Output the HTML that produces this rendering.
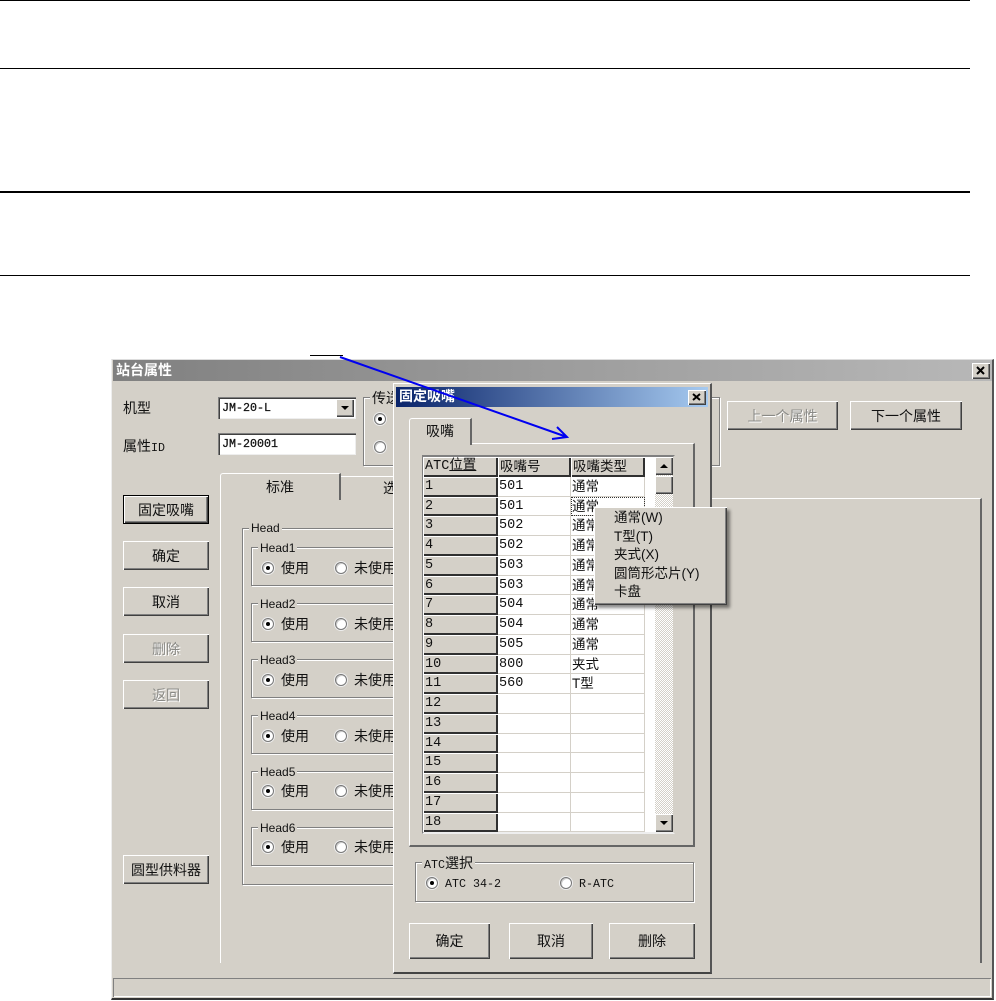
<!DOCTYPE html>
<html><head><meta charset="utf-8"><style>
html,body{margin:0;padding:0;background:#fff}
body{position:relative;width:996px;height:1001px;overflow:hidden;font-family:"Liberation Sans","Noto Sans CJK SC",sans-serif;font-size:14px;color:#111;line-height:1}
div,span{position:absolute;box-sizing:border-box;white-space:nowrap}
.l{background:#000;left:0;width:970px;height:1px}
.bg{background:#d4d0c8}
.btn{background:#d4d0c8;box-shadow:inset 1px 1px #fff,inset -1px -1px #404040,inset -2px -2px #808080;display:flex;align-items:center;justify-content:center;font-size:14px}
.dis{color:#8a8a86;text-shadow:1px 1px #fff}
.def{border:1px solid #000}
.grp{border:1px solid #808080;box-shadow:1px 1px #fff,inset 1px 1px #fff}
.cap{background:#d4d0c8;padding:0 2px;font-size:12px;height:14px;line-height:14px}
.t{line-height:16px;height:16px}
.r{width:12px;height:12px;border-radius:50%;background:#fff;border:1px solid #777;box-shadow:0 0 0 1px #eee,inset 1px 1px #ccc}
.r.on::after{content:"";position:absolute;left:3px;top:3px;width:4px;height:4px;border-radius:50%;background:#000}
.sunk{background:#fff;box-shadow:inset 1px 1px #808080,inset 2px 2px #404040,inset -1px -1px #eee;font:11.67px/1 "Liberation Mono",monospace;padding:6px 0 0 4px;-webkit-text-stroke:.25px #111}
.x{background:#d4d0c8;box-shadow:inset 1px 1px #fff,inset -1px -1px #404040,inset -2px -2px #808080}
.x svg{position:absolute;left:0;top:0}
.grid{display:grid;left:423px;top:457px;width:222px;grid-template-columns:75px 73px 74px;grid-auto-rows:19.76px}
.grid b{font-weight:normal;display:block;overflow:hidden;white-space:nowrap;font-size:13.5px;line-height:20px;padding-left:1px}
.grid .h{background:#d4d0c8;box-shadow:inset 1px 1px #fff,inset -2px -2px #303030;padding-left:2px}
.grid .c{background:#fff;border-right:1px solid #d4d0c8;border-bottom:1px solid #d4d0c8}
.m{font-family:"Liberation Mono","Noto Sans CJK SC",monospace;font-size:11.67px}
.grid .f{outline:1px dotted #333;outline-offset:-1px}
.sb{box-shadow:inset 1px 1px #fff,inset -1px -1px #404040,inset -2px -2px #808080;background:#d4d0c8}
.tri{width:0;height:0;border-left:4px solid transparent;border-right:4px solid transparent}
#w{left:0;top:0;width:996px;height:1001px;filter:blur(.35px)}
</style></head><body>
<div class="l" style="top:0"></div>
<div class="l" style="top:68px"></div>
<div class="l" style="top:191px;height:2px"></div>
<div class="l" style="top:275px"></div>
<div class="l" style="left:310px;top:355px;width:33px"></div>

<div id="w">
<div class="bg" style="left:111px;top:359px;width:883px;height:641px;border-right:2px solid #555;border-bottom:2px solid #333;border-left:1px solid #eee;border-top:1px solid #ddd"></div>
<div style="left:113px;top:360px;width:879px;height:21px;background:linear-gradient(90deg,#808080,#b8b8b8);color:#fff;font-weight:bold;font-size:14px;line-height:20px;padding-left:3px">站台属性</div>
<div class="x" style="left:972px;top:363px;width:18px;height:16px"><svg width="18" height="16"><path d="M5 4L12 11M12 4L5 11" stroke="#000" stroke-width="2" fill="none"/></svg></div>

<div class="t" style="left:123px;top:400px">机型</div>
<div class="t" style="left:123px;top:438px">属性<span class="m" style="position:static">ID</span></div>
<div class="sunk" style="left:218px;top:397px;width:138px;height:22px">JM-20-L</div>
<div class="btn" style="left:336px;top:399px;width:18px;height:18px"><div class="tri" style="border-top:4px solid #000;position:static"></div></div>
<div class="sunk" style="left:218px;top:433px;width:138px;height:22px">JM-20001</div>

<div class="grp" style="left:363px;top:397px;width:357px;height:69px"></div>
<div class="cap" style="left:370px;top:391px;font-size:14px">传送</div>
<div class="r on" style="left:374px;top:413px"></div>
<div class="r" style="left:374px;top:441px"></div>

<div class="btn dis" style="left:727px;top:401px;width:111px;height:29px">上一个属性</div>
<div class="btn" style="left:850px;top:401px;width:112px;height:29px">下一个属性</div>

<div class="btn def" style="left:123px;top:495px;width:86px;height:29px">固定吸嘴</div>
<div class="btn" style="left:123px;top:541px;width:86px;height:29px">确定</div>
<div class="btn" style="left:123px;top:587px;width:86px;height:29px">取消</div>
<div class="btn dis" style="left:123px;top:634px;width:86px;height:29px">删除</div>
<div class="btn dis" style="left:123px;top:680px;width:86px;height:29px">返回</div>
<div class="btn" style="left:123px;top:855px;width:86px;height:29px">圆型供料器</div>

<div style="left:220px;top:498px;width:762px;height:465px;border-top:1px solid #fff;border-left:1px solid #fff;border-right:2px solid #666"></div>
<div class="bg" style="left:220px;top:473px;width:121px;height:27px;border-top:1px solid #fff;border-left:1px solid #fff;border-right:2px solid #666;border-top-left-radius:3px;text-align:center;line-height:26px;font-size:14px">标准</div>
<div class="bg" style="left:341px;top:476px;width:60px;height:23px;border-top:1px solid #fff;line-height:23px;padding-left:42px;font-size:14px">选</div>

<div class="grp" style="left:242px;top:528px;width:160px;height:357px;border-right:0"></div>
<div class="cap" style="left:249px;top:521px">Head</div>

<div class="grp" style="left:251px;top:547px;width:150px;height:39px;border-right:0"></div>
<div class="cap" style="left:258px;top:541px">Head1</div>
<div class="r on" style="left:262px;top:562px"></div><div class="t" style="left:281px;top:560px">使用</div>
<div class="r" style="left:335px;top:562px"></div><div class="t" style="left:354px;top:560px">未使用</div>

<div class="grp" style="left:251px;top:603px;width:150px;height:39px;border-right:0"></div>
<div class="cap" style="left:258px;top:597px">Head2</div>
<div class="r on" style="left:262px;top:618px"></div><div class="t" style="left:281px;top:616px">使用</div>
<div class="r" style="left:335px;top:618px"></div><div class="t" style="left:354px;top:616px">未使用</div>

<div class="grp" style="left:251px;top:659px;width:150px;height:39px;border-right:0"></div>
<div class="cap" style="left:258px;top:653px">Head3</div>
<div class="r on" style="left:262px;top:674px"></div><div class="t" style="left:281px;top:672px">使用</div>
<div class="r" style="left:335px;top:674px"></div><div class="t" style="left:354px;top:672px">未使用</div>

<div class="grp" style="left:251px;top:715px;width:150px;height:39px;border-right:0"></div>
<div class="cap" style="left:258px;top:709px">Head4</div>
<div class="r on" style="left:262px;top:730px"></div><div class="t" style="left:281px;top:728px">使用</div>
<div class="r" style="left:335px;top:730px"></div><div class="t" style="left:354px;top:728px">未使用</div>

<div class="grp" style="left:251px;top:771px;width:150px;height:39px;border-right:0"></div>
<div class="cap" style="left:258px;top:765px">Head5</div>
<div class="r on" style="left:262px;top:785px"></div><div class="t" style="left:281px;top:783px">使用</div>
<div class="r" style="left:335px;top:785px"></div><div class="t" style="left:354px;top:783px">未使用</div>

<div class="grp" style="left:251px;top:827px;width:150px;height:39px;border-right:0"></div>
<div class="cap" style="left:258px;top:821px">Head6</div>
<div class="r on" style="left:262px;top:841px"></div><div class="t" style="left:281px;top:839px">使用</div>
<div class="r" style="left:335px;top:841px"></div><div class="t" style="left:354px;top:839px">未使用</div>

<div style="left:113px;top:978px;width:878px;height:19px;box-shadow:inset 1px 1px #808080,inset -1px -1px #fff"></div>

<!-- dialog -->
<div class="bg" style="left:393px;top:383px;width:319px;height:591px;border-right:2px solid #555;border-bottom:2px solid #444;border-left:1px solid #fff;border-top:1px solid #fff"></div>
<div style="left:396px;top:387px;width:312px;height:20px;background:linear-gradient(90deg,#0a246a,#a6caf0);color:#fff;font-weight:bold;font-size:14px;line-height:19px;padding-left:3px">固定吸嘴</div>
<div class="x" style="left:688px;top:390px;width:18px;height:15px"><svg width="18" height="15"><path d="M5 4L12 10M12 4L5 10" stroke="#000" stroke-width="2" fill="none"/></svg></div>

<div style="left:409px;top:443px;width:286px;height:404px;border-top:1px solid #fff;border-left:1px solid #fff;border-right:2px solid #666;border-bottom:2px solid #666"></div>
<div class="bg" style="left:409px;top:418px;width:63px;height:27px;border-top:1px solid #fff;border-left:1px solid #fff;border-right:2px solid #666;border-top-left-radius:3px;text-align:center;line-height:25px;font-size:14px">吸嘴</div>

<div style="left:422px;top:455px;width:253px;height:379px;background:#fff;border:2px solid #808080;border-right-color:#d4d0c8;border-bottom-color:#eee"></div>
<div class="grid">
<b class="h m">ATC<span style="position:static;font-size:13.5px;text-decoration:underline">位置</span></b><b class="h">吸嘴号</b><b class="h">吸嘴类型</b>
<b class="h m">1</b><b class="c m">501</b><b class="c">通常</b>
<b class="h m">2</b><b class="c m">501</b><b class="c f">通常</b>
<b class="h m">3</b><b class="c m">502</b><b class="c">通常</b>
<b class="h m">4</b><b class="c m">502</b><b class="c">通常</b>
<b class="h m">5</b><b class="c m">503</b><b class="c">通常</b>
<b class="h m">6</b><b class="c m">503</b><b class="c">通常</b>
<b class="h m">7</b><b class="c m">504</b><b class="c">通常</b>
<b class="h m">8</b><b class="c m">504</b><b class="c">通常</b>
<b class="h m">9</b><b class="c m">505</b><b class="c">通常</b>
<b class="h m">10</b><b class="c m">800</b><b class="c">夹式</b>
<b class="h m">11</b><b class="c m">560</b><b class="c">T型</b>
<b class="h m">12</b><b class="c"></b><b class="c"></b>
<b class="h m">13</b><b class="c"></b><b class="c"></b>
<b class="h m">14</b><b class="c"></b><b class="c"></b>
<b class="h m">15</b><b class="c"></b><b class="c"></b>
<b class="h m">16</b><b class="c"></b><b class="c"></b>
<b class="h m">17</b><b class="c"></b><b class="c"></b>
<b class="h m">18</b><b class="c"></b><b class="c"></b>
</div>
<div style="left:655px;top:457px;width:18px;height:375px;background:repeating-conic-gradient(#d4d0c8 0 25%,#fff 0 50%) 0 0/2px 2px"></div>
<div class="sb" style="left:655px;top:457px;width:18px;height:18px"><div class="tri" style="left:5px;top:7px;border-bottom:4px solid #000"></div></div>
<div class="sb" style="left:655px;top:476px;width:18px;height:18px"></div>
<div class="sb" style="left:655px;top:814px;width:18px;height:18px"><div class="tri" style="left:5px;top:7px;border-top:4px solid #000"></div></div>

<div class="grp" style="left:415px;top:862px;width:279px;height:40px"></div>
<div class="cap" style="left:422px;top:856px;font-size:14px"><span class="m" style="position:static">ATC</span>選択</div>
<div class="r on" style="left:426px;top:877px"></div><div class="t m" style="left:445px;top:876px">ATC 34-2</div>
<div class="r" style="left:560px;top:877px"></div><div class="t m" style="left:579px;top:876px">R-ATC</div>

<div class="btn" style="left:409px;top:923px;width:81px;height:36px">确定</div>
<div class="btn" style="left:509px;top:923px;width:84px;height:36px">取消</div>
<div class="btn" style="left:609px;top:923px;width:86px;height:36px">删除</div>

<!-- context menu -->
<div class="bg" style="left:594px;top:507px;width:133px;height:98px;box-shadow:inset 1px 1px #fff,inset -1px -1px #404040,inset -2px -2px #808080,3px 3px 3px rgba(0,0,0,.45)"></div>
<div class="t" style="left:614px;top:510px;font-size:13.5px">通常(W)</div>
<div class="t" style="left:614px;top:529px;font-size:13.5px">T型(T)</div>
<div class="t" style="left:614px;top:547px;font-size:13.5px">夹式(X)</div>
<div class="t" style="left:614px;top:566px;font-size:13.5px">圆筒形芯片(Y)</div>
<div class="t" style="left:614px;top:584px;font-size:13.5px">卡盘</div>
</div>

<svg style="position:absolute;left:0;top:0" width="996" height="1001"><path d="M340 357L567 437M557 427L567 437L552 439" fill="none" stroke="#0000f0" stroke-width="2"/></svg>
</body></html>
